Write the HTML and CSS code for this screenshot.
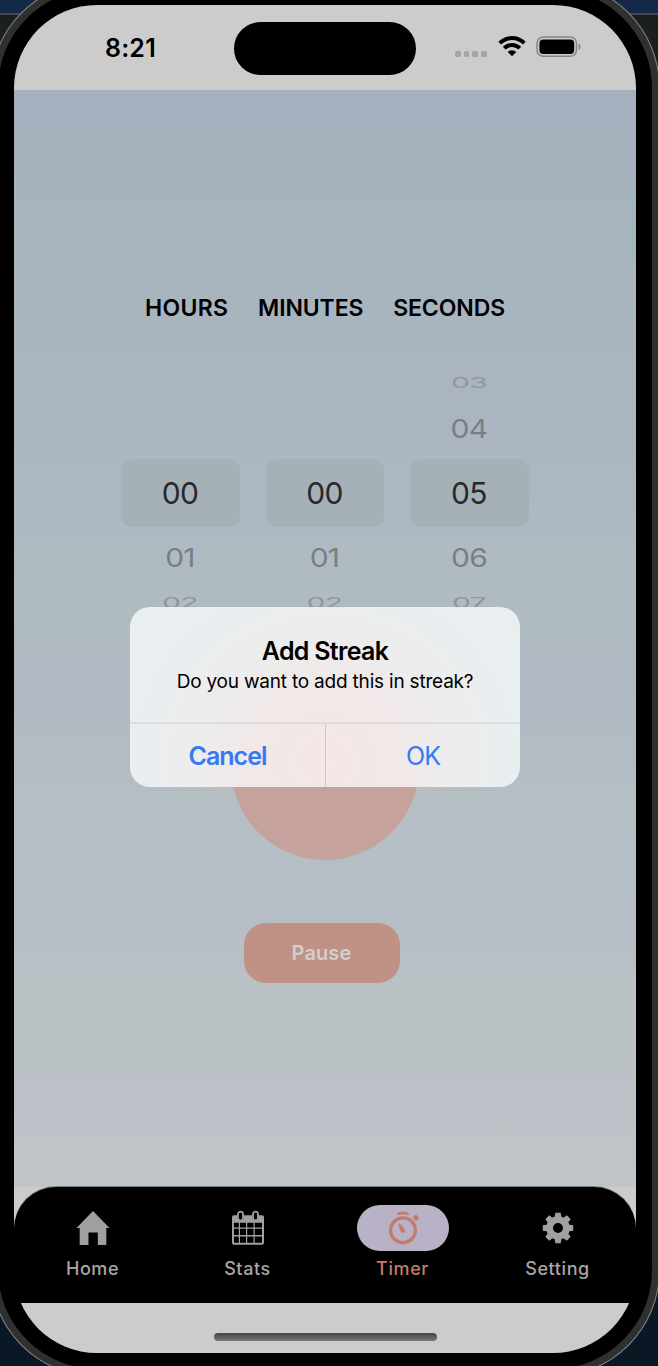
FILE: index.html
```html
<!DOCTYPE html>
<html lang="en">
<head>
<meta charset="utf-8">
<title>Timer</title>
<link rel="stylesheet" href="styles.css">
</head>
<body>
<div class="screen">
  <header class="status">
    <span class="clock">8:21</span>
    <span class="island"></span>
    <span class="indicators">
      <span class="signal"><i></i><i></i><i></i><i></i></span>
      <svg class="wifi" width="28" height="21" viewBox="0 0 28 21">
        <g fill="none" stroke="#000" stroke-width="4">
          <path d="M1.700 7.200a17.400 17.400 0 0 1 24.600 0"/>
          <path d="M6.200 12.200a11 11 0 0 1 15.600 0"/>
        </g>
        <path d="M9.700 15.900a6.200 6.200 0 0 1 8.600 0L14 20.300z"/>
      </svg>
      <svg class="battery" width="46" height="22" viewBox="0 0 46 22">
        <rect x="1" y="1" width="39.500" height="19.300" rx="6.200" fill="none" stroke="#858585" stroke-width="1.500"/>
        <rect x="3.400" y="3.400" width="34.800" height="14.500" rx="4" fill="#000"/>
        <path d="M42.600 7.200c2.600 1.400 2.600 5.600 0 7z" fill="#858585"/>
      </svg>
    </span>
  </header>

  <main class="timer">
    <div class="units"><span class="hours">HOURS</span><span class="minutes">MINUTES</span><span class="seconds">SECONDS</span></div>
    <div class="pickers">
      <div class="wheel"><span class="far"></span><span class="near"></span><span class="selected">00</span><span class="near">01</span><span class="far">02</span></div>
      <div class="wheel"><span class="far"></span><span class="near"></span><span class="selected">00</span><span class="near">01</span><span class="far">02</span></div>
      <div class="wheel"><span class="far">03</span><span class="near">04</span><span class="selected">05</span><span class="near">06</span><span class="far">07</span></div>
    </div>
    <div class="dial"></div>
    <button class="pause"><span>Pause</span></button>
  </main>

  <nav class="tabs">
    <a class="tab">
      <span class="pill"><svg width="34" height="34" viewBox="0 0 36 36"><path d="M18 0 35.500 18h-3.400v18h-9V22.800h-9.900V36H3.900V18H.5z"/></svg></span>
      <span class="label">Home</span>
    </a>
    <a class="tab">
      <span class="pill"><svg width="36" height="36" viewBox="0 0 36 36">
        <path fill-rule="evenodd" d="M4 5.200h3.500v2.300a3.200 3.200 0 0 0 6.400 0V5.200h8.300v2.300a3.200 3.200 0 0 0 6.400 0V5.200H32q2 0 2 2v25.600q0 2-2 2H4q-2 0-2-2V7.200q0-2 2-2zM4 12.700v4.800h4.800v-4.800zm6 0v4.800h6v-4.800zm7.200 0v4.800h6.300v-4.800zm7.500 0v4.800H32v-4.800zM4 18.800v6.300h4.800v-6.300zm6 0v6.300h6v-6.300zm7.200 0v6.300h6.300v-6.300zm7.500 0v6.300H32v-6.300zM4 26.400v6.400h4.800v-6.400zm6 0v6.400h6v-6.400zm7.200 0v6.400h6.300v-6.400zm7.500 0v6.400H32v-6.400z"/>
        <g fill="#000" stroke="#9fa19f" stroke-width="1.800"><rect x="8" y="1.600" width="5" height="8.800" rx="2.500"/><rect x="23" y="1.600" width="5" height="8.800" rx="2.500"/></g>
      </svg></span>
      <span class="label">Stats</span>
    </a>
    <a class="tab active">
      <span class="pill"><svg width="36" height="36" viewBox="0 0 36 36">
        <circle cx="18" cy="20.300" r="12.400" fill="none" stroke="#c17c6c" stroke-width="3.400"/>
        <path d="M11.800 5.200C12 2.500 14 1.500 18 1.500s6 1 6.200 3.700q-6.200-1.600-12.400 0zM27.600 7.800l3.400-3.400 3.500 3.500-3.400 3.400z"/>
        <path d="M13.400 13.200q2.900.6 6.500 6.300a2.300 2.300 0 0 1-3.600 2.700q-3.200-5.400-2.900-9z"/>
      </svg></span>
      <span class="label">Timer</span>
    </a>
    <a class="tab">
      <span class="pill"><svg width="32" height="32" viewBox="-16 -16 32 32">
        <circle r="8.400" fill="none" stroke="#9fa19f" stroke-width="6.800"/>
        <g id="teeth"><path d="M-3.600-9.500-2.700-15.200h5.400l.9 5.700zM3.600 9.500l-.9 5.700h-5.400l-.9-5.700zM-9.500 3.600l-5.700-.9v-5.400l5.700-.9zM9.500-3.600l5.700.9v5.400l-5.700.9z"/></g>
        <use href="#teeth" transform="rotate(45)"/>
      </svg></span>
      <span class="label">Setting</span>
    </a>
  </nav>
  <footer class="home-area"><span class="home-indicator"></span></footer>

  <div class="alert" role="alertdialog">
    <div class="alert-text"><h1>Add Streak</h1><p>Do you want to add this in streak?</p></div>
    <div class="alert-actions"><button class="cancel">Cancel</button><button class="ok">OK</button></div>
  </div>
</div>
</body>
</html>
```
FILE: styles.css
```css
* { box-sizing: border-box; }
body {
  margin: 0;
  padding: 5px 22px 13px 14px;
  width: 658px;
  height: 1366px;
  overflow: hidden;
  background: linear-gradient(#14284a 0 13px, #49494b 13px 15px, #1c1f20 15px 600px, #0a1826 1100px);
  font-family: Inter, "Liberation Sans", sans-serif;
  color: #000;
}
button { border: 0; padding: 0; font-family: inherit; background: none; }
.screen {
  position: relative;
  width: 622px;
  height: 1348px;
  border-radius: 83px;
  display: flex;
  flex-direction: column;
  background: #cccccc;
  box-shadow: 0 0 0 16px #000, 0 0 0 23px #303030, 0 0 0 24px #858585;
}
.status {
  height: 85px;
  flex: none;
  display: grid;
  grid-template-columns: 220px 182px 220px;
}
.clock {
  padding: 28px 0 0 91px;
  font-size: 25px;
  line-height: 30px;
  font-weight: 600;
  letter-spacing: .2px;
}
.island { height: 53px; margin-top: 16.500px; border-radius: 27px; background: #000; }
.indicators { display: flex; align-items: flex-start; padding: 31px 0 0 39px; }
.signal { display: flex; gap: 3.200px; padding-top: 15px; width: 43px; }
.signal i { width: 5.500px; height: 6px; border-radius: 1.500px; background: #a5a5a5; }
.wifi { margin-right: 10px; }
.timer {
  height: 1097px;
  flex: none;
  display: flex;
  flex-direction: column;
  align-items: center;
  background: linear-gradient(#a4b0bd 0, #a6b4be 12%, #a8b5be 21%, #abb5bf 27%, #aeb8c2 39%, #b0bbc1 43%, #b1b9c2 56%, #b5bfc4 66%, #b6bdc6 75%, #b9c1c5 81%, #bbc1c6 90%, #bfc5c9 100%);
}
.units {
  display: flex;
  justify-content: space-between;
  width: 360px;
  margin-top: 203px;
  font-size: 23px;
  line-height: 30px;
  font-weight: 600;
}
.hours { letter-spacing: .3px; }
.minutes, .seconds { letter-spacing: -.1px; }
.pickers { display: flex; gap: 26px; margin-top: 47px; }
.wheel {
  width: 118.500px;
  height: 243px;
  display: flex;
  flex-direction: column;
  text-align: center;
  font-size: 30px;
  letter-spacing: -.7px;
}
.wheel span { flex: none; display: block; }
.wheel .near, .wheel .far, .wheel .selected { padding-right: 1px; }
.far { height: 26px; line-height: 24px; color: #8e979f; transform: scaleY(.5); }
.far:first-child { line-height: 22px; }
.near { height: 63px; line-height: 61px; color: #777f86; transform: scaleY(.87); }
.far + .near { padding-top: 2px; }
.wheel .selected {
  height: 68px;
  line-height: 68px;
  border-radius: 11px;
  color: #272a2c;
  background: #a6b0b7;
}
.dial { width: 188px; height: 188px; margin-top: 59px; border-radius: 50%; background: #c5a29b; flex: none; }
.pause {
  width: 156px;
  height: 60px;
  margin: 63px 7px 0 0;
  border-radius: 22px;
  background: #bf9285;
  color: #d0d0d0;
  font-size: 20px;
  font-weight: 600;
  letter-spacing: .1px;
}
.tabs {
  flex: none;
  height: 116px;
  display: grid;
  grid-template-columns: repeat(4, 155px);
  padding-left: 1px;
  border-radius: 42px 42px 0 0;
  background: #000;
  box-shadow: 0 -1px 0 #788389;
}
.tab { display: flex; flex-direction: column; align-items: center; padding-top: 18px; color: #aaa5a4; }
.tab svg { fill: #9fa19f; }
.pill { width: 92px; height: 46px; border-radius: 23px; display: flex; align-items: center; justify-content: center; }
.label { margin-top: 6px; font-size: 18px; line-height: 24px; font-weight: 500; letter-spacing: .6px; }
.active { color: #c17c6c; }
.active .pill { background: #b9b2c6; }
.active svg { fill: #c17c6c; }
.home-area { height: 50px; flex: none; display: flex; justify-content: center; padding-top: 30px; }
.home-indicator { width: 223px; height: 8px; border-radius: 4px; background: linear-gradient(#454545, #777); }
.alert {
  position: absolute;
  left: 116px;
  top: 602px;
  width: 390px;
  height: 180px;
  border-radius: 20px;
  overflow: hidden;
  background: radial-gradient(ellipse 195px 185px at 195px 155px, #f4e7e6 0, #f1e8e8 40%, #eeecec 62%, #e9eef0 100%);
}
.alert-text { height: 117px; padding-top: 28px; text-align: center; border-bottom: 2px solid #dddddf; }
h1 { margin: 0; font-size: 25px; line-height: 32px; font-weight: 600; letter-spacing: -.7px; }
p { margin: 0; font-size: 19px; line-height: 30px; letter-spacing: -.2px; }
.alert-actions { height: 63px; display: grid; grid-template-columns: 196px 1fr; }
.alert-actions button { font-size: 25px; color: #347af6; letter-spacing: -1px; }
.cancel { border-right: 1px solid #d2c7c8; }
.alert-actions .cancel { font-weight: 600; }
```
